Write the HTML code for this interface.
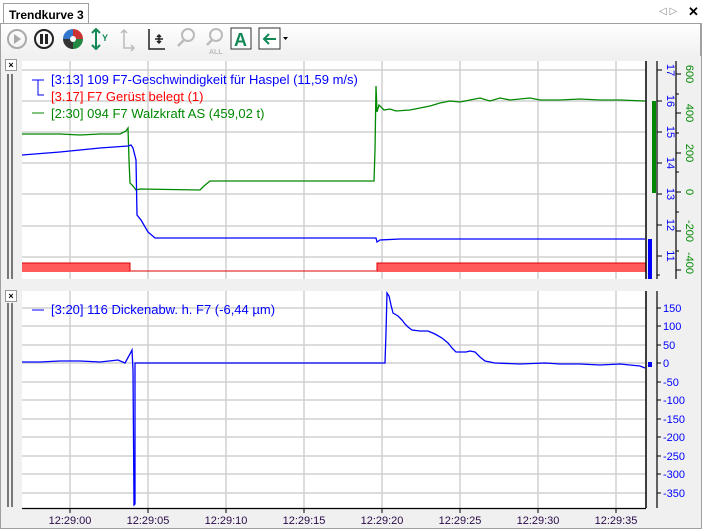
<!DOCTYPE html>
<html><head><meta charset="utf-8"><style>
body{margin:0;width:702px;height:529px;overflow:hidden;background:#f0f0f0;font-family:"Liberation Sans",sans-serif;position:relative}
.abs{position:absolute}
</style></head><body>
<div class="abs" style="left:0;top:0;width:702px;height:23px;background:#fff;border-bottom:1px solid #a0a0a0"></div>
<div class="abs" style="left:3px;top:3px;width:86px;height:21px;background:#fff;border:1px solid #a0a0a0;border-bottom:none;font-weight:bold;font-size:12px;line-height:22px;padding-left:5px;box-sizing:border-box">Trendkurve 3</div>
<div class="abs" style="left:659px;top:6px;font-size:10px;color:#888">◁ ▷</div>
<div class="abs" style="left:688px;top:4px;font-size:13px;font-weight:bold">✕</div>
<div class="abs" style="left:0;top:24px;width:700px;height:32px;background:linear-gradient(#fff,#f0f0f0);border-right:1px solid #a0a0a0"></div>
<svg class="abs" style="left:0;top:24px" width="300" height="32">
<circle cx="17" cy="15" r="9" fill="none" stroke="#aaa" stroke-width="2"/><path d="M14 10 L21 15 L14 20Z" fill="#aaa"/>
<circle cx="44" cy="15" r="9" fill="none" stroke="#222" stroke-width="2"/><rect x="40" y="10" width="3" height="10" fill="#222"/><rect x="45" y="10" width="3" height="10" fill="#222"/>
<path d="M73 15 L73 5 A10 10 0 0 1 83 15Z" fill="#c33"/><path d="M73 15 L83 15 A10 10 0 0 1 73 25Z" fill="#284"/><path d="M73 15 L73 25 A10 10 0 0 1 63 15Z" fill="#333"/><path d="M73 15 L63 15 A10 10 0 0 1 73 5Z" fill="#37c"/><circle cx="73" cy="15" r="3" fill="#fff"/>
<path d="M96 5 V25 M92 9 L96 5 L100 9 M92 21 L96 25 L100 21" stroke="#185" stroke-width="2" fill="none"/><text x="102" y="17" font-size="9" font-weight="bold" fill="#185">Y</text>
<path d="M124 6 V24 H134 M121 9 L124 6 L127 9 M131 21 L134 24 L131 27" stroke="#bbb" stroke-width="1.5" fill="none"/>
<path d="M149 5 V25 H165 M155 15 H163 M159 11 V19 M157 13 L159 11 L161 13 M157 17 L159 19 L161 17" stroke="#222" stroke-width="1.5" fill="none"/>
<circle cx="188" cy="11" r="6" fill="none" stroke="#bbb" stroke-width="2"/><path d="M184 16 L178 22" stroke="#bbb" stroke-width="2.5"/>
<circle cx="216" cy="11" r="6" fill="none" stroke="#bbb" stroke-width="2"/><path d="M212 16 L207 21" stroke="#bbb" stroke-width="2.5"/><text x="209" y="30" font-size="7" fill="#bbb" font-weight="bold">ALL</text>
<rect x="231" y="4" width="20" height="21" fill="#fff" stroke="#333"/><text x="234" y="22" font-size="18" font-weight="bold" fill="#185">A</text>
<rect x="259" y="4" width="21" height="21" fill="#fff" stroke="#333"/><path d="M276 15 H264 M269 10 L264 15 L269 20" stroke="#185" stroke-width="2" fill="none"/>
<path d="M283 13 h5 l-2.5 3z" fill="#000"/>
</svg>
<div class="abs" style="left:5px;top:59px;width:10px;height:10px;border:1px solid #999;background:#fff;font-size:9px;line-height:10px;text-align:center;font-weight:bold">×</div>
<div class="abs" style="left:5px;top:290px;width:10px;height:10px;border:1px solid #999;background:#fff;font-size:9px;line-height:10px;text-align:center;font-weight:bold">×</div>
<div class="abs" style="left:7px;top:74px;width:2px;height:205px;background:#777"></div><div class="abs" style="left:11px;top:74px;width:2px;height:205px;background:#777"></div>
<div class="abs" style="left:7px;top:303px;width:2px;height:204px;background:#777"></div><div class="abs" style="left:11px;top:303px;width:2px;height:204px;background:#777"></div>
<svg class="abs" style="left:0;top:0" width="702" height="529">
<rect x="22" y="61" width="624" height="218" fill="#fff"/>
<rect x="22" y="291" width="624" height="217" fill="#fff"/>
<g stroke="#d0d0d0" stroke-width="1.5">
<path d="M70 61V279M148 61V279M226 61V279M304 61V279M382 61V279M460 61V279M538 61V279M616 61V279"/>
<path d="M22 70H646M22 101H646M22 132H646M22 163H646M22 194H646M22 226H646M22 257H646"/>
<path d="M70 291V508M148 291V508M226 291V508M304 291V508M382 291V508M460 291V508M538 291V508M616 291V508"/>
<path d="M22 308H646M22 326H646M22 345H646M22 363H646M22 382H646M22 400H646M22 419H646M22 437H646M22 456H646M22 474H646M22 493H646"/>
</g>
<rect x="22" y="263" width="108" height="9" fill="#ff5b5b"/><rect x="377" y="263" width="269" height="9" fill="#ff5b5b"/>
<path d="M22 263H130V271H377V263H646" stroke="#d00" fill="none"/>
<polyline fill="none" stroke="#080" stroke-width="1.3" points="22,134 60,134 80,135 100,134 120,134 126,131 128,128 129,160 130,183 133,186 136,190 140,189 200,190 204,186 210,181 300,181 374,181 375,150 376,86 377,112 379,105 384,110 390,109 396,111 410,110 430,106 440,103 450,101 460,102 470,100 480,98 490,101 500,98 510,100 530,98 540,100 560,100 580,99 600,100 620,100 645,101"/>
<polyline fill="none" stroke="#00f" stroke-width="1.3" points="22,155 60,152 100,148 128,146 131,145 133,148 136,160 137,215 141,220 148,232 155,238 170,238 250,238 376,238 377,242 380,240 400,239 500,239 600,239 645,239"/>
<polyline fill="none" stroke="#00f" stroke-width="1.3" points="22,362 40,362 60,361 80,361 100,362 118,360 125,363 130,354 132,350 133,370 134,505 135,504 135,363 385,363 386,333 387,293 389,296 391,305 393,313 398,316 402,320 405,324 408,327 412,330 420,331 428,331 435,334 442,338 448,343 452,348 456,352 466,352 470,351 475,352 480,357 485,361 495,363 520,364 545,363 560,364 580,364 600,365 620,364 640,366 645,368"/>
<path d="M646 61V279M646 291V508" stroke="#000" stroke-width="1.5"/>
<rect x="652" y="101" width="4" height="92" fill="#080"/>
<rect x="648" y="239" width="4" height="40" fill="#00f"/>
<rect x="648" y="362" width="4" height="5" fill="#00f"/>
<path d="M657 61V279M676 61V279M657 291V508M22 508.5H646" stroke="#000" stroke-width="1.2"/>
<g stroke="#000"><path d="M657 70h5M657 101h5M657 132h5M657 163h5M657 194h5M657 225h5M657 256h5M657 275h3"/>
<path d="M676 74h5M676 94h3M676 113h5M676 133h3M676 153h5M676 172h3M676 192h5M676 212h3M676 231h5M676 251h3M676 270h5"/>
<path d="M657 308h4M657 326h4M657 345h4M657 363h4M657 382h4M657 400h4M657 419h4M657 437h4M657 456h4M657 474h4M657 493h4"/>
<path d="M70 508v5M148 508v5M226 508v5M304 508v5M382 508v5M460 508v5M538 508v5M616 508v5"/></g>
<g font-size="11" fill="#00f" font-family="Liberation Sans,sans-serif">
<text transform="translate(666,70) rotate(90)" text-anchor="middle" dy="-1">17</text>
<text transform="translate(666,101) rotate(90)" text-anchor="middle" dy="-1">16</text>
<text transform="translate(666,132) rotate(90)" text-anchor="middle" dy="-1">15</text>
<text transform="translate(666,163) rotate(90)" text-anchor="middle" dy="-1">14</text>
<text transform="translate(666,194) rotate(90)" text-anchor="middle" dy="-1">13</text>
<text transform="translate(666,225) rotate(90)" text-anchor="middle" dy="-1">12</text>
<text transform="translate(666,256) rotate(90)" text-anchor="middle" dy="-1">11</text>
</g>
<g font-size="11" fill="#080" font-family="Liberation Sans,sans-serif">
<text transform="translate(685,74) rotate(90)" text-anchor="middle" dy="-1">600</text>
<text transform="translate(685,113) rotate(90)" text-anchor="middle" dy="-1">400</text>
<text transform="translate(685,153) rotate(90)" text-anchor="middle" dy="-1">200</text>
<text transform="translate(685,192) rotate(90)" text-anchor="middle" dy="-1">0</text>
<text transform="translate(685,231) rotate(90)" text-anchor="middle" dy="-1">-200</text>
<text transform="translate(685,263) rotate(90)" text-anchor="middle" dy="-1">-400</text>
</g>
<g font-size="11" fill="#00f" font-family="Liberation Sans,sans-serif">
<text x="663" y="312">150</text><text x="663" y="330">100</text><text x="663" y="349">50</text><text x="663" y="367">0</text>
<text x="663" y="386">-50</text><text x="663" y="404">-100</text><text x="663" y="423">-150</text><text x="663" y="441">-200</text>
<text x="663" y="460">-250</text><text x="663" y="478">-300</text><text x="663" y="497">-350</text>
</g>
<g font-size="11" fill="#2a0a4a" text-anchor="middle" font-family="Liberation Sans,sans-serif">
<text x="70" y="524">12:29:00</text><text x="148" y="524">12:29:05</text><text x="226" y="524">12:29:10</text><text x="304" y="524">12:29:15</text>
<text x="382" y="524">12:29:20</text><text x="460" y="524">12:29:25</text><text x="538" y="524">12:29:30</text><text x="616" y="524">12:29:35</text>
</g>
<path d="M32 80H44M38 80V95H44" stroke="#00f" fill="none"/>
<path d="M32 113H44" stroke="#080"/>
<path d="M32 310H44" stroke="#00f"/>
<g font-size="13" font-family="Liberation Sans,sans-serif">
<text x="51" y="84" fill="#00f">[3:13] 109 F7-Geschwindigkeit für Haspel (11,59 m/s)</text>
<text x="51" y="101" fill="#f00">[3.17] F7 Gerüst belegt (1)</text>
<text x="51" y="118" fill="#080">[2:30] 094 F7 Walzkraft AS (459,02 t)</text>
<text x="51" y="314" fill="#00f">[3:20] 116 Dickenabw. h. F7 (-6,44 µm)</text>
</g>
<rect x="0.5" y="23.5" width="701" height="505" fill="none" stroke="#a0a0a0"/>
</svg>
</body></html>
